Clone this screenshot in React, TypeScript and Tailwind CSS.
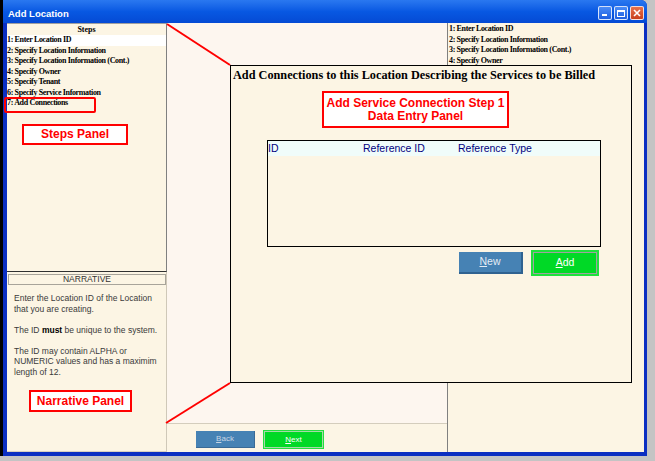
import React from "react";

const steps = [
  "1: Enter Location ID",
  "2: Specify Location Information",
  "3: Specify Location Information (Cont.)",
  "4: Specify Owner",
  "5: Specify Tenant",
  "6: Specify Service Information",
  "7: Add Connections",
];

const serif = "font-['Liberation_Serif',serif]";
const sans = "font-['Liberation_Sans',Arial,sans-serif]";

function TitleButtons() {
  return (
    <div className="flex gap-[2px] mt-[6px] mr-[3px]">
      {/* minimise */}
      <div className="w-[14px] h-[14px] rounded-[2px] border border-white/80 bg-gradient-to-b from-[#4a8cf7] to-[#1f5fe0] relative">
        <div className="absolute left-[3px] bottom-[3px] w-[5px] h-[2px] bg-white" />
      </div>
      {/* maximise */}
      <div className="w-[14px] h-[14px] rounded-[2px] border border-white/80 bg-gradient-to-b from-[#4a8cf7] to-[#1f5fe0] flex items-center justify-center">
        <div className="w-[8px] h-[7px] border border-white border-t-2" />
      </div>
      {/* close */}
      <div className="w-[14px] h-[14px] rounded-[2px] border border-white/80 bg-gradient-to-b from-[#e8714a] to-[#c8401c] flex items-center justify-center">
        <svg width="8" height="8" viewBox="0 0 8 8">
          <path d="M1 1L7 7M7 1L1 7" stroke="white" strokeWidth="1.6" />
        </svg>
      </div>
    </div>
  );
}

function RedLabel({ children, className }: { children: React.ReactNode; className: string }) {
  return (
    <div
      className={`border-2 border-[#ff0000] bg-white text-[#ff0000] font-bold text-[12px] leading-[13px] ${sans} flex flex-col items-center justify-center ${className}`}
    >
      {children}
    </div>
  );
}

function StepRow({ text, active }: { text: string; active?: boolean }) {
  return (
    <div
      className={`h-[10.5px] text-[8px] leading-[10.5px] tracking-[-0.35px] font-bold ${serif} text-black whitespace-nowrap ${
        active ? "bg-white" : ""
      }`}
    >
      {text}
    </div>
  );
}

export default function App() {
  return (
    <div className="relative w-[655px] h-[461px] bg-[#c4c4c4] overflow-hidden">
      {/* window */}
      <div className="w-[647px] h-[456px] flex flex-col border-l-[3px] border-black bg-[#0b2fc2] rounded-tr-[6px]">
        {/* title bar */}
        <div className="h-[23px] flex items-start justify-between bg-gradient-to-b from-[#2a78f0] via-[#0858e2] to-[#054ad4] rounded-tr-[6px]">
          <span className={`text-white font-bold text-[9.5px] ${sans} ml-[5px] mt-[8px] leading-[12px]`}>
            Add Location
          </span>
          <TitleButtons />
        </div>

        {/* body */}
        <div className="flex flex-1 pl-[4px] pr-[3px] pb-[4px] min-h-0">
          {/* left column */}
          <div className="w-[160px] flex flex-col">
            {/* steps */}
            <div className="relative h-[249px] bg-[#fcf5e4] border-t border-[#a0a0a0] border-r border-r-[#808080] border-b border-b-[#303030]">
              <div className={`h-[11px] text-center text-[8px] leading-[11px] font-bold ${serif} text-black`}>Steps</div>
              {steps.map((s, i) => (
                <StepRow key={s} text={s} active={i === 0} />
              ))}
              <div className="absolute left-[-3px] top-[73px] w-[92px] h-[16px] border-2 border-[#ff0000] rounded-[2px]" />
              <RedLabel className="ml-[15px] mt-[15px] w-[106px] h-[21px]">Steps Panel</RedLabel>
            </div>

            {/* narrative */}
            <div className="flex-1 bg-[#fcf5e4] border-r border-[#cfc8b8] border-b border-b-[#d8d0c0] pt-[2px] pl-[1px]">
              <div className={`h-[11px] border border-[#a8a49a] text-center text-[8.5px] leading-[9px] ${sans} text-[#333]`}>
                NARRATIVE
              </div>
              <div className={`mt-[8px] pl-[6px] text-[8.5px] leading-[10.5px] ${sans} text-[#3a3a3a]`}>
                <p className="mb-[10.5px]">
                  Enter the Location ID of the Location
                  <br />
                  that you are creating.
                </p>
                <p className="mb-[10.5px]">
                  The ID <b className="text-black">must</b> be unique to the system.
                </p>
                <p>
                  The ID may contain ALPHA or
                  <br />
                  NUMERIC values and has a maximim
                  <br />
                  length of 12.
                </p>
              </div>
              <RedLabel className="ml-[21px] mt-[13px] w-[103px] h-[22px]">Narrative Panel</RedLabel>
            </div>
          </div>

          {/* middle column */}
          <div className="w-[281px] flex flex-col bg-[#fdf6ef] border-r border-[#808080]">
            <div className="flex-1" />
            <div className="h-[29px] border-t border-[#d4cdbd] bg-[#fcf5e5] flex items-start gap-[9px] pl-[29px] pt-[7px]">
              <button className={`w-[59px] h-[17px] bg-[#4682b4] border-b border-r border-[#3a6a96] text-[8px] ${sans} text-[#c8d6e4]`}>
                <span className="underline">B</span>ack
              </button>
              <button className={`w-[59px] h-[17px] bg-[#00d926] border border-[#a8d8a8] outline outline-1 outline-[#22e040] text-[8px] ${sans} text-white`}>
                <span className="underline">N</span>ext
              </button>
            </div>
          </div>

          {/* right column */}
          <div className="flex-1 bg-[#fcf5e4] pt-[1px] pl-[1px]">
            {steps.slice(0, 4).map((s) => (
              <StepRow key={s} text={s} />
            ))}
          </div>
        </div>
      </div>

      {/* annotation lines */}
      <svg className="absolute inset-0 pointer-events-none" width="655" height="461">
        <line x1="167" y1="24" x2="230" y2="65" stroke="#ff0000" strokeWidth="2" />
        <line x1="166" y1="423" x2="230" y2="383" stroke="#ff0000" strokeWidth="2" />
      </svg>

      {/* data entry panel */}
      <div className="absolute left-[230px] top-[65px] w-[402px] h-[318px] border border-black bg-[#fcf5e4]">
        <div className={`pl-[2px] pt-[2px] text-[12.25px] leading-[14px] font-bold ${serif} text-black whitespace-nowrap`}>
          Add Connections to this Location Describing the Services to be Billed
        </div>
        <RedLabel className="ml-[91px] mt-[9px] w-[187px] h-[37px]">
          <span>Add Service Connection Step 1</span>
          <span>Data Entry Panel</span>
        </RedLabel>
        <div className="ml-[36px] mt-[12px] w-[334px] h-[107px] border border-black">
          <div className={`h-[15px] bg-[#f0fcfa] flex text-[10.5px] leading-[15px] ${sans} text-[#000080]`}>
            <span className="w-[95px]">ID</span>
            <span className="w-[95px]">Reference ID</span>
            <span>Reference Type</span>
          </div>
        </div>
        <div className="flex gap-[10px] ml-[228px] mt-[5px]">
          <button className={`w-[64px] h-[22px] bg-[#4682b4] border-b-2 border-r-2 border-[#2f6290] text-[10.5px] ${sans} text-[#e4ecf4]`}>
            <span className="underline">N</span>ew
          </button>
          <button className={`w-[64px] h-[22px] bg-[#00d926] border border-[#a0a0a0] outline outline-2 outline-[#1ee23c] text-[10.5px] ${sans} text-white`}>
            <span className="underline">A</span>dd
          </button>
        </div>
      </div>
    </div>
  );
}
